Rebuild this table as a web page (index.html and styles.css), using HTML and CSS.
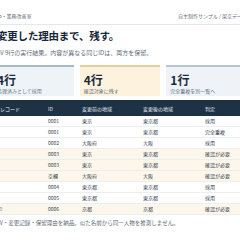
FILE: index.html
```html
<!DOCTYPE html>
<html lang="ja">
<head>
<meta charset="utf-8">
<title>変更した理由まで、残す。</title>
<link rel="stylesheet" href="styles.css">
</head>
<body>
<div class="page">
  <header class="topbar">
    <span class="brand">Lab・業務改善室</span>
    <span class="meta">自主制作サンプル / 架空データ</span>
  </header>
  <h1 class="title">変更した理由まで、残す。</h1>
  <p class="lead">CSV 9行の実行結果。内容が異なる同じIDは、両方を保留。</p>
  <div class="cards">
    <div class="card card-adopt">
      <div class="num">4行</div>
      <div class="cap">処理済みとして採用</div>
    </div>
    <div class="card card-check">
      <div class="num">4行</div>
      <div class="cap">確認対象に残す</div>
    </div>
    <div class="card card-dup">
      <div class="num">1行</div>
      <div class="cap">完全重複を別一覧へ</div>
    </div>
  </div>
  <table class="result">
    <colgroup>
      <col class="c-rec"><col class="c-id"><col class="c-before"><col class="c-after"><col class="c-judge">
    </colgroup>
    <thead>
      <tr><th>レコード</th><th>ID</th><th>変更前の地域</th><th>変更後の地域</th><th>判定</th></tr>
    </thead>
    <tbody>
      <tr><td class="rec">#2</td><td>0001</td><td>東京</td><td>東京都</td><td>採用</td></tr>
      <tr><td class="rec">#3</td><td>0001</td><td>東京</td><td>東京都</td><td>完全重複</td></tr>
      <tr><td class="rec">#4</td><td>0002</td><td>大阪府</td><td>大阪</td><td>採用</td></tr>
      <tr class="hold"><td class="rec">#5</td><td>0003</td><td>東京</td><td>東京都</td><td>確認が必要</td></tr>
      <tr class="hold"><td class="rec">#6</td><td>0003</td><td>東京</td><td>東京都</td><td>確認が必要</td></tr>
      <tr class="hold"><td class="rec">#7</td><td>空欄</td><td>大阪府</td><td>大阪</td><td>確認が必要</td></tr>
      <tr><td class="rec">#8</td><td>0004</td><td>東京都</td><td>東京都</td><td>採用</td></tr>
      <tr><td class="rec">#9</td><td>0005</td><td>東京都</td><td>東京都</td><td>採用</td></tr>
      <tr class="hold"><td class="rec">#10</td><td>0006</td><td>京都</td><td>京都</td><td>確認が必要</td></tr>
    </tbody>
  </table>
  <p class="foot">CSV・変更記録・保留理由を納品。似た名前から同一人物を推測しません。</p>
</div>
</body>
</html>
```
FILE: styles.css
```css
html, body {
  margin: 0;
  padding: 0;
}
body {
  background: #ffffff;
  display: flex;
  justify-content: center;
  overflow: hidden;
  font-family: "Noto Sans CJK JP", "Noto Sans", sans-serif;
  color: #1d2c3b;
}
.page {
  width: 254px;
  flex-shrink: 0;
}
.topbar {
  display: flex;
  justify-content: space-between;
  align-items: center;
  padding: 12px 0 5px;
  border-bottom: 1px solid #e4e8ec;
  font-size: 5px;
  line-height: 7px;
  color: #5f6c79;
}
.title {
  margin: 4px 0 0;
  padding-left: 4px;
  font-size: 10.5px;
  line-height: 13px;
  letter-spacing: -0.2px;
  font-weight: 700;
  color: #17283a;
}
.lead {
  margin: 6px 0 0;
  font-size: 6px;
  line-height: 9px;
  color: #5f6c79;
}
.cards {
  margin-top: 8px;
  display: grid;
  grid-template-columns: 1fr 1fr 1fr;
  gap: 6px;
}
.card {
  border-top: 2px solid #a6b9c9;
  padding: 6px 4px 2.5px;
}
.card-adopt {
  background: #eef3f7;
  border-top-color: #a6b9c9;
}
.card-check {
  background: #fdf2de;
  border-top-color: #e8cf9f;
}
.card-dup {
  background: #eff3f7;
  border-top-color: #b6c5d2;
}
.num {
  font-size: 12px;
  line-height: 13px;
  font-weight: 700;
  color: #1c2b3a;
}
.cap {
  margin-top: 1.5px;
  font-size: 5px;
  line-height: 6px;
  color: #66737f;
}
.result {
  margin-top: 4px;
  width: 254px;
  table-layout: fixed;
  border-collapse: collapse;
  font-size: 5px;
}
.c-rec { width: 48px; }
.c-id { width: 34px; }
.c-before { width: 61px; }
.c-after { width: 62px; }
.c-judge { width: 49px; }
.result th {
  background: #1e3246;
  color: #e6ecf2;
  font-weight: 400;
  text-align: left;
  padding: 5.5px 0 4.5px 7px;
  line-height: 6px;
}
.result td {
  padding: 2px 0 2px 7px;
  line-height: 6px;
  color: #34424f;
  border-bottom: 1px solid #eceff2;
  white-space: nowrap;
}
.result td.rec {
  padding-left: 1px;
  color: #8894a0;
}
.result tr.hold td {
  background: #fdf6ea;
}
.foot {
  margin: 5px 0 0;
  font-size: 5.5px;
  line-height: 6px;
  color: #5f6c79;
}
```
